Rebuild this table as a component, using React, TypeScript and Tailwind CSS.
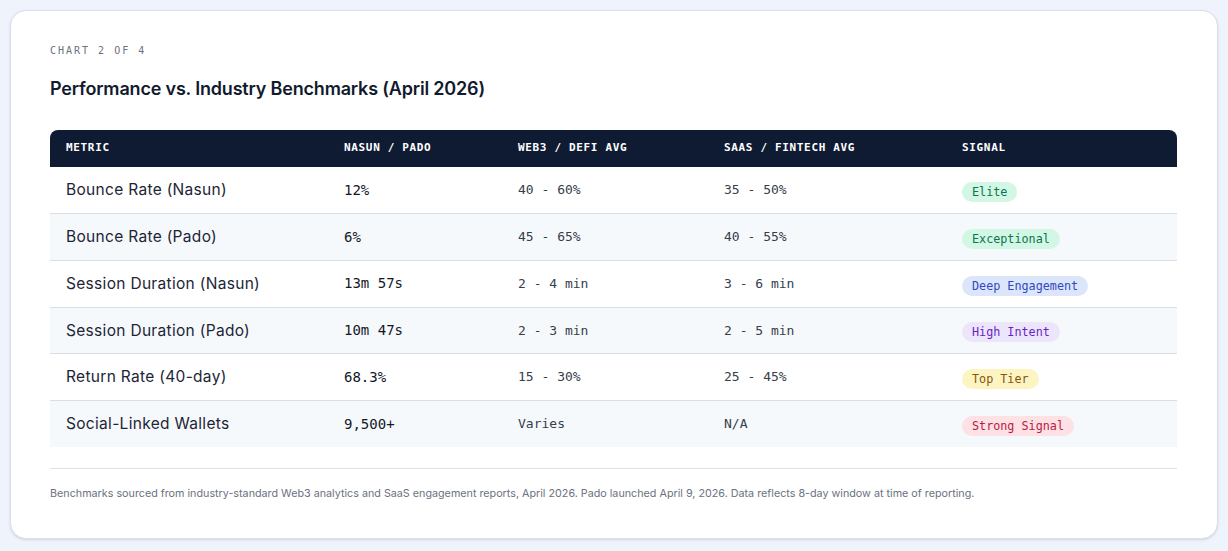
import React from "react";

type Row = {
  metric: string;
  value: string;
  web3: string;
  saas: string;
  signal: string;
  tone: "green" | "blue" | "purple" | "yellow" | "red";
};

const rows: Row[] = [
  { metric: "Bounce Rate (Nasun)", value: "12%", web3: "40 - 60%", saas: "35 - 50%", signal: "Elite", tone: "green" },
  { metric: "Bounce Rate (Pado)", value: "6%", web3: "45 - 65%", saas: "40 - 55%", signal: "Exceptional", tone: "green" },
  { metric: "Session Duration (Nasun)", value: "13m 57s", web3: "2 - 4 min", saas: "3 - 6 min", signal: "Deep Engagement", tone: "blue" },
  { metric: "Session Duration (Pado)", value: "10m 47s", web3: "2 - 3 min", saas: "2 - 5 min", signal: "High Intent", tone: "purple" },
  { metric: "Return Rate (40-day)", value: "68.3%", web3: "15 - 30%", saas: "25 - 45%", signal: "Top Tier", tone: "yellow" },
  { metric: "Social-Linked Wallets", value: "9,500+", web3: "Varies", saas: "N/A", signal: "Strong Signal", tone: "red" },
];

const tones = {
  green: "bg-[#d3f7e5] text-[#0a7550]",
  blue: "bg-[#dce6fb] text-[#3048c4]",
  purple: "bg-[#ece5fc] text-[#6a1fc4]",
  yellow: "bg-[#fcf5c2] text-[#875312]",
  red: "bg-[#fde1e4] text-[#bb1a46]",
};

const mono = "font-['DejaVu_Sans_Mono','Liberation_Mono',monospace]";

function Badge({ label, tone }: { label: string; tone: Row["tone"] }) {
  return (
    <span className={`inline-block rounded-full px-[10px] py-[2px] text-[11.75px] leading-4 ${mono} ${tones[tone]}`}>
      {label}
    </span>
  );
}

export default function App() {
  return (
    <div className="min-h-[551px] bg-[#eff3fb] p-[10px] font-['Inter','Noto_Sans',sans-serif]">
      <div className="rounded-[16px] border border-[#d9e0ec] bg-white pl-[39px] pr-[40px] pt-[33px] pb-[36px] shadow-sm">
        <div className={`text-[10px] leading-[14px] tracking-[0.2em] text-[#6b7280] ${mono}`}>CHART 2 OF 4</div>
        <h2 className="mt-[18px] text-[18px] leading-[26px] font-semibold tracking-[-0.01em] text-[#111a2e]">
          Performance vs. Industry Benchmarks (April 2026)
        </h2>

        <table className="mt-[28px] w-full table-fixed border-collapse">
          <colgroup>
            <col className="w-[278px]" />
            <col className="w-[174px]" />
            <col className="w-[206px]" />
            <col className="w-[238px]" />
            <col />
          </colgroup>
          <thead>
            <tr className="bg-[#0f1b33] text-left text-white">
              {["METRIC", "NASUN / PADO", "WEB3 / DEFI AVG", "SAAS / FINTECH AVG", "SIGNAL"].map((h, i) => (
                <th
                  key={h}
                  className={`h-[37px] px-4 text-[11px] font-bold tracking-[0.06em] ${mono} ${i === 0 ? "rounded-tl-[8px]" : ""} ${i === 4 ? "rounded-tr-[8px]" : ""}`}
                >
                  {h}
                </th>
              ))}
            </tr>
          </thead>
          <tbody>
            {rows.map((r, i) => (
              <tr
                key={r.metric}
                className={`${i % 2 === 1 ? "bg-[#f6f9fc]" : "bg-white"} ${i < rows.length - 1 ? "border-b border-[#d8dee8]" : ""}`}
              >
                <td className="h-[46.7px] px-4 text-[15.5px] tracking-[0.02em] text-[#1c2536]">{r.metric}</td>
                <td className={`px-4 text-[14px] text-[#111827] ${mono}`}>{r.value}</td>
                <td className={`px-4 text-[13px] text-[#363d4b] ${mono}`}>{r.web3}</td>
                <td className={`px-4 text-[13px] text-[#363d4b] ${mono}`}>{r.saas}</td>
                <td className="px-4">
                  <Badge label={r.signal} tone={r.tone} />
                </td>
              </tr>
            ))}
          </tbody>
        </table>

        <div className="mt-[21px] border-t border-[#dde2ea] pt-[17px] text-[10.75px] leading-4 text-[#6b7280]">
          Benchmarks sourced from industry-standard Web3 analytics and SaaS engagement reports, April 2026. Pado launched April 9, 2026. Data reflects 8-day window at time of reporting.
        </div>
      </div>
    </div>
  );
}
